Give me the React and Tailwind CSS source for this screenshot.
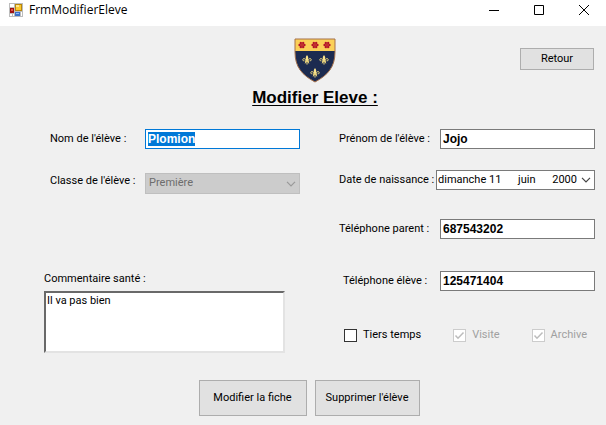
import { useEffect, useRef } from "react";

function FormIcon() {
  return (
    <svg width="14" height="14" viewBox="0 0 14 14" shapeRendering="crispEdges" aria-hidden="true">
      <rect width="14" height="14" fill="#bcbcbc" />
      <rect x="1" y="1" width="4" height="3" fill="#fff" />
      <rect x="1" y="11" width="2" height="2" fill="#fff" />
      <rect x="4" y="11" width="1" height="2" fill="#fff" />
      <rect x="12" y="9" width="1" height="4" fill="#fff" />
      <rect x="1" y="5" width="4" height="5" fill="#a01010" />
      <rect x="2" y="6" width="2" height="2" fill="#e0524a" />
      <rect x="6" y="1" width="7" height="7" fill="#b8860b" />
      <rect x="7" y="2" width="5" height="5" fill="#fcc92f" />
      <rect x="7" y="2" width="3" height="2" fill="#ffe68a" />
      <rect x="6" y="9" width="5" height="4" fill="#3a6fc8" />
      <rect x="7" y="10" width="3" height="1" fill="#8fb8f4" />
    </svg>
  );
}

function Rose({ x }) {
  return (
    <g transform={`translate(${x} 7)`} fill="#b3122a">
      {[30, 90, 150, 210, 270, 330].map((a) => (
        <circle key={a} cx="0" cy="-2.4" r="1.2" transform={`rotate(${a})`} />
      ))}
      <circle r="1.6" />
      <circle r="0.7" fill="#e0702a" />
    </g>
  );
}

function Lily({ x, y }) {
  return (
    <g transform={`translate(${x} ${y})`}>
      <path d="M0-5C1.8-3 1.4-1 .8 1H-.8C-1.4-1-1.8-3 0-5Z" fill="#fbe58c" />
      <path
        d="M-1 1C-1.4-1.6-4-2.4-4.2-.2c0 1.2 1.2 1.4 1.4.6M1 1C1.4-1.6 4-2.4 4.2-.2c0 1.2-1.2 1.4-1.4.6M-2.2 1.4H2.2M0 1v3.6M-1 1.6-1.8 3.4M1 1.6 1.8 3.4"
        fill="none"
        stroke="#ecd67c"
        strokeWidth="1"
      />
    </g>
  );
}

function Crest() {
  return (
    <svg width="42" height="45" viewBox="0 0 42 45" role="img" aria-label="Blason">
      <path d="M1 1H41V14C41 29 34 37 21 44C8 37 1 29 1 14Z" fill="#1c2b50" />
      <path d="M1 1H41V13H1Z" fill="#fbd058" />
      <path d="M1 1H41V14C41 29 34 37 21 44C8 37 1 29 1 14Z" fill="none" stroke="#a5704a" strokeWidth="1" />
      <Rose x={8} />
      <Rose x={21} />
      <Rose x={33} />
      <Lily x={13} y={22} />
      <Lily x={30} y={22} />
      <Lily x={21} y={35} />
    </svg>
  );
}

function Chevron({ className }) {
  return (
    <svg className={className} width="10" height="6" viewBox="0 0 10 6" fill="none" stroke="currentColor" aria-hidden="true">
      <path d="M1 .8 5 4.8 9 .8" strokeWidth="1.2" />
    </svg>
  );
}

const label = "whitespace-nowrap leading-4";
const button = "border border-[#adadad] bg-[#e1e1e1] text-center leading-4 text-black";
const field =
  "h-5 w-[155px] border border-[#7a7a7a] bg-white px-0.5 font-['Liberation_Sans',Arial,sans-serif] text-[12px] font-bold text-black outline-none";

function TextRow({ id, text, value }) {
  return (
    <div className="flex items-center justify-between">
      <label htmlFor={id} className={label}>{text}</label>
      <input id={id} type="text" defaultValue={value} className={field} />
    </div>
  );
}

function Check({ id, text, checked, disabled }) {
  return (
    <div className={`flex items-center gap-1.5 ${disabled ? "text-[#a0a0a0]" : "text-black"}`}>
      <span className="relative flex">
        <input
          id={id}
          type="checkbox"
          defaultChecked={checked}
          disabled={disabled}
          className="peer size-[13px] appearance-none border border-[#333333] bg-white disabled:border-[#cccccc]"
        />
        <svg className="pointer-events-none absolute inset-0 hidden peer-checked:block" width="13" height="13" viewBox="0 0 13 13" fill="none" stroke="#bcbcbc" strokeWidth="1.5" aria-hidden="true">
          <path d="M2.5 6.5 5 9.2 10.5 3.5" />
        </svg>
      </span>
      <label htmlFor={id} className={label}>{text}</label>
    </div>
  );
}

export default function App() {
  const nameRef = useRef(null);
  useEffect(() => {
    nameRef.current.focus();
    nameRef.current.select();
  }, []);

  return (
    <div className="flex min-h-screen flex-col bg-[#f0f0f0] font-[Roboto,sans-serif] text-[11px] text-black">
      <header className="flex h-[26px] items-center justify-between bg-white pl-[9px]">
        <div className="flex items-center gap-1.5 pb-1.5">
          <FormIcon />
          <span className="font-['Open_Sans',sans-serif] text-[12px] leading-4">FrmModifierEleve</span>
        </div>
        <div className="flex pb-1.5">
          <button type="button" aria-label="Réduire" className="flex h-5 w-[45px] items-center justify-center">
            <svg width="10" height="10" viewBox="0 0 10 10" stroke="#000"><path d="M0 5.5H10" /></svg>
          </button>
          <button type="button" aria-label="Agrandir" className="flex h-5 w-[45px] items-center justify-center">
            <svg width="10" height="10" viewBox="0 0 10 10" fill="none" stroke="#000"><path d="M.5.5h9v9h-9Z" /></svg>
          </button>
          <button type="button" aria-label="Fermer" className="flex h-5 w-[45px] items-center justify-center">
            <svg width="10" height="10" viewBox="0 0 10 10" stroke="#000"><path d="M0 0 10 10M10 0 0 10" /></svg>
          </button>
        </div>
      </header>

      <form className="flex flex-col" onSubmit={(e) => e.preventDefault()}>
        <div className="grid grid-cols-[1fr_auto_1fr] items-start pt-3 pr-3 pl-9">
          <span />
          <div className="flex flex-col items-center gap-[5px]">
            <Crest />
            <h1 className="font-['Liberation_Sans',Arial,sans-serif] text-[17px] leading-5 font-bold underline decoration-1 underline-offset-2">Modifier Eleve :</h1>
          </div>
          <button type="button" className={`${button} mt-2.5 h-[22px] w-[74px] justify-self-end`}>Retour</button>
        </div>

        <div className="grid grid-cols-2 gap-x-[39px] pt-[21px] pr-[11px] pl-11">
          <div className="flex flex-col">
            <div className="flex items-center justify-between pl-1.5">
              <label htmlFor="nom" className={label}>Nom de l'élève :</label>
              <input
                ref={nameRef}
                id="nom"
                type="text"
                defaultValue="Plomion"
                className="h-5 w-[155px] border border-[#0078d7] bg-white px-0.5 font-['Liberation_Sans',Arial,sans-serif] text-[12px] font-bold text-black outline-none selection:bg-[#0078d7] selection:text-white"
              />
            </div>
            <div className="mt-6 flex items-start justify-between pl-1.5">
              <label htmlFor="classe" className={label}>Classe de l'élève :</label>
              <div className="relative">
                <select id="classe" disabled className="h-[21px] w-[155px] appearance-none border border-[#bfbfbf] bg-[#cccccc] px-[3px] text-[#6d6d6d] opacity-100">
                  <option>Première</option>
                </select>
                <Chevron className="pointer-events-none absolute top-2 right-1 text-[#999999]" />
              </div>
            </div>
            <label htmlFor="commentaire" className={`${label} mt-auto mb-1`}>Commentaire santé :</label>
          </div>

          <div className="flex flex-col">
            <TextRow id="prenom" text="Prénom de l'élève :" value="Jojo" />
            <div className="mt-[21px] flex items-center justify-between">
              <span id="naissance" className={label}>Date de naissance :</span>
              <button
                type="button"
                aria-labelledby="naissance date"
                aria-haspopup="dialog"
                className="flex h-5 w-[159px] items-center justify-between border border-[#7a7a7a] bg-white pr-[3px] pl-px"
              >
                <span id="date" className="flex grow items-center justify-between pr-1">
                  <span>dimanche 11</span>
                  <span>juin</span>
                  <span>2000</span>
                </span>
                <Chevron className="text-[#444444]" />
              </button>
            </div>
            <div className="mt-[29px]">
              <TextRow id="telParent" text="Téléphone parent :" value="687543202" />
            </div>
            <div className="mt-8 pl-1">
              <TextRow id="telEleve" text="Téléphone élève :" value="125471404" />
            </div>
          </div>

          <textarea
            id="commentaire"
            defaultValue="Il va pas bien"
            className="h-[62px] w-[241px] resize-none border-2 border-t-[#696969] border-r-[#e3e3e3] border-b-[#e3e3e3] border-l-[#696969] bg-white px-px leading-4 text-black outline-none"
          />
          <div className="mt-9 flex items-start justify-between pr-2 pl-[5px]">
            <Check id="tiers" text="Tiers temps" />
            <Check id="visite" text="Visite" checked disabled />
            <Check id="archive" text="Archive" checked disabled />
          </div>
        </div>

        <div className="flex justify-center gap-2 pt-[27px] pl-3 pb-2">
          <button type="submit" className={`${button} h-9 w-[108px]`}>Modifier la fiche</button>
          <button type="button" className={`${button} h-9 w-[105px]`}>Supprimer l'élève</button>
        </div>
      </form>
    </div>
  );
}
